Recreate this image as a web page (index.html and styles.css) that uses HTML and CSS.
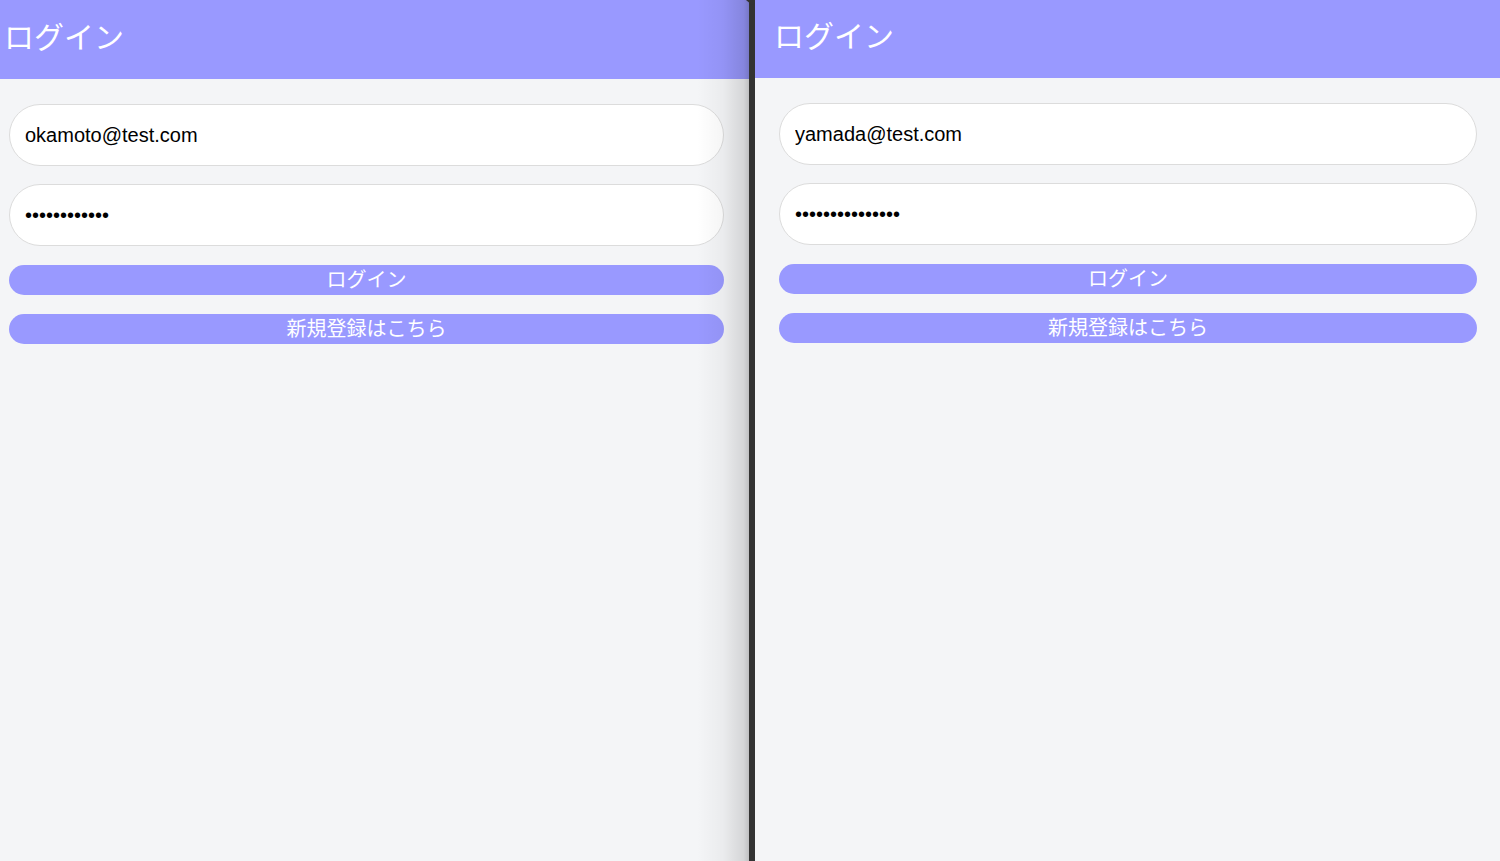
FILE: index.html
```html
<!DOCTYPE html>
<html lang="ja">
<head>
<meta charset="utf-8">
<title>ログイン</title>
<link rel="stylesheet" href="styles.css">
</head>
<body>
<div class="split">
  <section class="pane pane-left">
    <header class="bar"><h1 class="title">ログイン</h1></header>
    <form class="form">
      <input class="field" type="email" value="okamoto@test.com">
      <input class="field" type="password" value="okamoto12345">
      <button class="btn" type="button">ログイン</button>
      <button class="btn" type="button">新規登録はこちら</button>
    </form>
  </section>
  <div class="divider"></div>
  <section class="pane pane-right">
    <header class="bar"><h1 class="title">ログイン</h1></header>
    <form class="form">
      <input class="field" type="email" value="yamada@test.com">
      <input class="field" type="password" value="yamada123456789">
      <button class="btn" type="button">ログイン</button>
      <button class="btn" type="button">新規登録はこちら</button>
    </form>
  </section>
</div>
</body>
</html>
```
FILE: styles.css
```css
* { box-sizing: border-box; }
html, body { margin: 0; padding: 0; }
body {
  background: #f4f5f7;
  font-family: "Liberation Sans", "Noto Sans CJK JP", sans-serif;
  overflow: hidden;
}
.split {
  display: flex;
  height: 861px;
}
.pane {
  position: relative;
  background: #f4f5f7;
  display: flex;
  flex-direction: column;
}
.pane-left { width: 749px; }
.pane-right { flex: 1; }
.pane-left::after {
  content: "";
  position: absolute;
  top: 0;
  right: 0;
  bottom: 0;
  width: 52px;
  background: linear-gradient(to right, rgba(0,0,0,0) 0%, rgba(0,0,0,0.04) 50%, rgba(0,0,0,0.13) 90%, rgba(0,0,0,0.22) 100%);
  pointer-events: none;
}
.divider {
  width: 6px;
  background: #333333;
  position: relative;
}
.divider::before {
  content: "";
  position: absolute;
  top: 0;
  left: -3px;
  border-left: 6px solid transparent;
  border-right: 6px solid transparent;
  border-top: 5px solid #333333;
}
.bar {
  background: #9999ff;
  display: flex;
  align-items: center;
}
.pane-left .bar { height: 79px; padding-left: 4px; }
.pane-right .bar { height: 78px; padding-left: 19px; }
.title {
  margin: 0;
  color: #ffffff;
  font-family: "Noto Sans CJK JP", sans-serif;
  font-weight: 400;
  font-size: 30px;
  line-height: 1;
  margin-top: -10px;
}
.form {
  display: flex;
  flex-direction: column;
  padding-top: 25px;
}
.pane-left .form { padding-left: 9px; padding-right: 25px; }
.pane-right .form { padding-left: 24px; padding-right: 23px; }
.field {
  height: 62px;
  border: 1px solid #dcdcdc;
  border-radius: 31px;
  background: #ffffff;
  padding: 0 15px;
  font-family: "Liberation Sans", sans-serif;
  font-size: 20px;
  color: #000000;
  margin: 0 0 18px 0;
  outline: none;
}
.field + .field { margin-bottom: 19px; }
.btn {
  height: 30px;
  border: none;
  border-radius: 15px;
  background: #9999ff;
  color: #ffffff;
  font-family: "Noto Sans CJK JP", sans-serif;
  font-size: 20px;
  line-height: 28px;
  padding: 0 0 2px 0;
  margin: 0 0 19px 0;
}
```
